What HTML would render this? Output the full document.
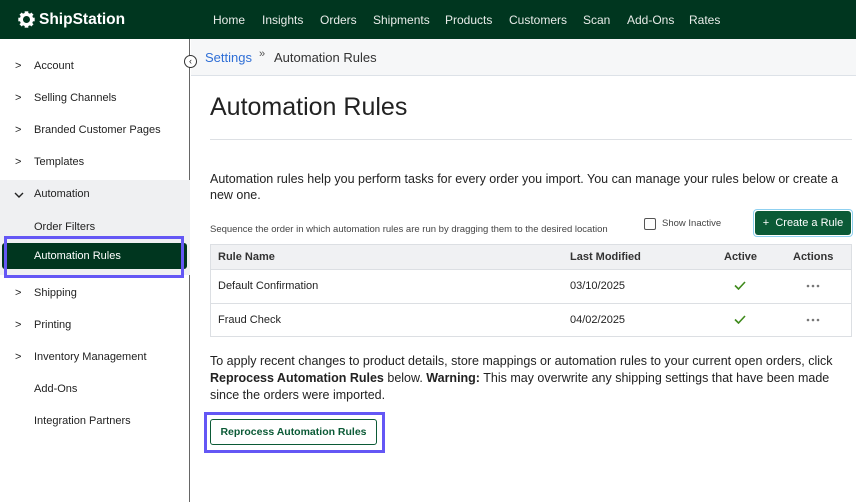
<!DOCTYPE html>
<html><head><meta charset="utf-8"><style>
*{box-sizing:border-box;margin:0;padding:0}
body{width:856px;height:502px;overflow:hidden;font-family:"Liberation Sans",sans-serif;background:#fff;position:relative;color:#222}
.hdr{position:absolute;left:0;top:0;width:856px;height:39px;background:#00361f}
.logo{position:absolute;left:39px;top:11px;color:#fff;font-weight:bold;font-size:15.5px}
.nav{position:absolute;top:13px;color:#e8ece9;font-size:12px}
.side{position:absolute;left:0;top:39px;width:190px;height:463px;border-right:1px solid #666;background:#fff}
.si{position:absolute;left:34px;font-size:11px;color:#222}
.chev{position:absolute;left:15px;font-size:11px;color:#222}
.ab{position:absolute;left:0;top:141px;width:190px;height:95px;background:#eff0f2}
.sel{position:absolute;left:2px;top:204px;width:185px;height:26px;background:#00361f;border-radius:3px}
.box{position:absolute;border:3px solid #6457f5}
.crumb{position:absolute;left:191px;top:39px;width:665px;height:37px;background:#f6f7f8;border-bottom:1px solid #dde2e8}
.t{position:absolute;white-space:nowrap}
.table{position:absolute;left:210px;top:244px;width:642px;height:93px;border:1px solid #dcdfe3}
.row{position:absolute;left:0;width:640px;border-top:1px solid #dcdfe3}
</style></head><body>
<div class="hdr">
<svg style="position:absolute;left:18px;top:11px" width="17" height="17" viewBox="0 0 16 16"><circle cx="8" cy="8" r="4.8" fill="none" stroke="#fff" stroke-width="3"/><g fill="#fff"><rect x="6.3" y="0.3" width="3.4" height="3"/><rect x="6.3" y="12.7" width="3.4" height="3"/><rect x="0.3" y="6.3" width="3" height="3.4"/><rect x="12.7" y="6.3" width="3" height="3.4"/><rect x="2" y="2" width="3" height="3" transform="rotate(45 3.5 3.5)"/><rect x="11" y="2" width="3" height="3" transform="rotate(45 12.5 3.5)"/><rect x="2" y="11" width="3" height="3" transform="rotate(45 3.5 12.5)"/><rect x="11" y="11" width="3" height="3" transform="rotate(45 12.5 12.5)"/></g></svg>
<div class="logo">ShipStation</div>
<span class="nav" style="left:213px">Home</span><span class="nav" style="left:262px">Insights</span><span class="nav" style="left:320px">Orders</span><span class="nav" style="left:373px">Shipments</span><span class="nav" style="left:445px">Products</span><span class="nav" style="left:509px">Customers</span><span class="nav" style="left:583px">Scan</span><span class="nav" style="left:627px">Add-Ons</span><span class="nav" style="left:689px">Rates</span>
</div>
<div class="side">
<div class="ab"></div>
<div class="sel"></div>
<span class="chev" style="top:21px">&gt;</span><span class="si" style="top:21px">Account</span>
<span class="chev" style="top:53px">&gt;</span><span class="si" style="top:53px">Selling Channels</span>
<span class="chev" style="top:85px">&gt;</span><span class="si" style="top:85px">Branded Customer Pages</span>
<span class="chev" style="top:117px">&gt;</span><span class="si" style="top:117px">Templates</span>
<svg style="position:absolute;left:14px;top:152px" width="10" height="8" viewBox="0 0 10 8"><path d="M1 2 L5 6 L9 2" fill="none" stroke="#222" stroke-width="1.4"/></svg><span class="si" style="top:149px">Automation</span>
<span class="si" style="top:182px">Order Filters</span>
<span class="si" style="top:211px;color:#fff">Automation Rules</span>
<span class="chev" style="top:248px">&gt;</span><span class="si" style="top:248px">Shipping</span>
<span class="chev" style="top:280px">&gt;</span><span class="si" style="top:280px">Printing</span>
<span class="chev" style="top:312px">&gt;</span><span class="si" style="top:312px">Inventory Management</span>
<span class="si" style="top:344px">Add-Ons</span>
<span class="si" style="top:376px">Integration Partners</span>
</div>
<div class="box" style="left:4px;top:236px;width:180px;height:42px"></div>
<div class="crumb"><span class="t" style="left:14px;top:11px;font-size:13px;color:#2f6fd6">Settings</span><span class="t" style="left:68px;top:9px;font-size:11px;color:#555">»</span><span class="t" style="left:83px;top:11px;font-size:13px;color:#333">Automation Rules</span></div>
<div style="position:absolute;left:184px;top:55px;width:13px;height:13px;border:1px solid #333;border-radius:50%;background:#fff;font-size:9px;line-height:11px;text-align:center">‹</div>
<div class="t" style="left:210px;top:93px;font-size:25px;color:#222">Automation Rules</div>
<div style="position:absolute;left:210px;top:139px;width:642px;border-top:1px solid #dde0e4"></div>
<div class="t" style="left:210px;top:171px;font-size:12.5px;line-height:16px;color:#222;white-space:normal;width:642px">Automation rules help you perform tasks for every order you import. You can manage your rules below or create a new one.</div>
<div class="t" style="left:210px;top:224px;font-size:9.5px;color:#444">Sequence the order in which automation rules are run by dragging them to the desired location</div>
<div style="position:absolute;left:644px;top:218px;width:12px;height:12px;border:1px solid #555;border-radius:2px"></div>
<div class="t" style="left:662px;top:218px;font-size:9.5px;color:#444">Show Inactive</div>
<div style="position:absolute;left:753px;top:209px;width:100px;height:28px;border:1px solid #8fd0f0;border-radius:4px;padding:1px"><div style="background:#0b5a36;border-radius:3px;height:24px;color:#fff;font-size:11px;text-align:center;line-height:24px">+&nbsp; Create a Rule</div></div>
<div class="table">
<div style="position:absolute;left:0;top:0;width:640px;height:24px;background:#f0f1f3"></div>
<div class="row" style="top:24px"></div><div class="row" style="top:58px"></div>
<span class="t" style="left:7px;top:6px;font-size:11px;font-weight:bold;color:#333">Rule Name</span>
<span class="t" style="left:359px;top:6px;font-size:11px;font-weight:bold;color:#333">Last Modified</span>
<span class="t" style="left:513px;top:6px;font-size:11px;font-weight:bold;color:#333">Active</span>
<span class="t" style="left:582px;top:6px;font-size:11px;font-weight:bold;color:#333">Actions</span>
<span class="t" style="left:7px;top:35px;font-size:11px">Default Confirmation</span>
<span class="t" style="left:359px;top:35px;font-size:11px">03/10/2025</span>
<span class="t" style="left:7px;top:69px;font-size:11px">Fraud Check</span>
<span class="t" style="left:359px;top:69px;font-size:11px">04/02/2025</span>
<svg style="position:absolute;left:523px;top:36px" width="12" height="9" viewBox="0 0 12 9"><path d="M1 4.5 L4.5 8 L11 1" fill="none" stroke="#3f8a1c" stroke-width="1.6"/></svg>
<svg style="position:absolute;left:523px;top:70px" width="12" height="9" viewBox="0 0 12 9"><path d="M1 4.5 L4.5 8 L11 1" fill="none" stroke="#3f8a1c" stroke-width="1.6"/></svg>
<svg style="position:absolute;left:595px;top:39px" width="14" height="4"><circle cx="2" cy="2" r="1.3" fill="#777"/><circle cx="7" cy="2" r="1.3" fill="#777"/><circle cx="12" cy="2" r="1.3" fill="#777"/></svg>
<svg style="position:absolute;left:595px;top:73px" width="14" height="4"><circle cx="2" cy="2" r="1.3" fill="#777"/><circle cx="7" cy="2" r="1.3" fill="#777"/><circle cx="12" cy="2" r="1.3" fill="#777"/></svg>
</div>
<div class="t" style="left:210px;top:353px;font-size:12.5px;line-height:17px;white-space:normal;width:645px;color:#222">To apply recent changes to product details, store mappings or automation rules to your current open orders, click <b>Reprocess Automation Rules</b> below. <b>Warning:</b> This may overwrite any shipping settings that have been made since the orders were imported.</div>
<div class="box" style="left:204px;top:412px;width:181px;height:41px"></div>
<div style="position:absolute;left:210px;top:419px;width:167px;height:26px;border:1px solid #0b5a36;border-radius:3px;color:#0b5a36;font-size:10.5px;font-weight:bold;text-align:center;line-height:24px">Reprocess Automation Rules</div>
</body></html>
